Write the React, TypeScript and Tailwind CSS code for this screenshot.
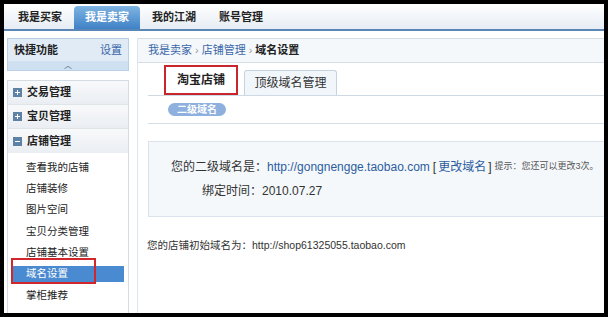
import React from 'react';

const font = "font-['Liberation_Sans','Noto_Sans_CJK_SC',sans-serif]";

const topTabs = ['我是买家', '我是卖家', '我的江湖', '账号管理'];

const groups = ['交易管理', '宝贝管理'];

const shopLinks = ['查看我的店铺', '店铺装修', '图片空间', '宝贝分类管理', '店铺基本设置', '域名设置', '掌柜推荐'];

const SquareIcon = ({ open }: { open?: boolean }) => (
  <span className="flex h-[9px] w-[9px] items-center justify-center bg-[#5d82a6]">
    {open ? (
      <span className="h-[1px] w-[5px] bg-white" />
    ) : (
      <span className="relative h-[5px] w-[5px]">
        <span className="absolute left-0 top-[2px] h-[1px] w-[5px] bg-white" />
        <span className="absolute left-[2px] top-0 h-[5px] w-[1px] bg-white" />
      </span>
    )}
  </span>
);

export default function App() {
  return (
    <div className={`h-[317px] w-[608px] bg-black pl-[4px] pr-[4px] pt-[4px] pb-[4px] ${font}`}>
      <div className="flex h-full w-full flex-col overflow-hidden bg-white">
        {/* top nav */}
        <div className="flex h-[27px] items-end gap-[1px] border-b-[2px] border-[#5a87b5] bg-gradient-to-b from-white to-[#e6edf4] pl-[3px]">
          {topTabs.map((t, i) => (
            <div
              key={t}
              className={`flex h-[23px] w-[66px] items-center justify-center text-[11px] font-bold ${
                i === 1
                  ? 'rounded-t-[4px] bg-gradient-to-b from-[#7fb4e2] to-[#3f82c6] text-white'
                  : 'text-[#222]'
              }`}
            >
              {t}
            </div>
          ))}
        </div>

        <div className="flex flex-1 pt-[7px]">
          {/* sidebar */}
          <div className="ml-[3px] flex w-[122px] flex-col">
            <div className="border border-[#b9cfe5]">
              <div className="flex h-[22px] items-center justify-between bg-[#e0ebf6] px-[6px] text-[11px]">
                <span className="font-bold text-[#222]">快捷功能</span>
                <span className="text-[#3a67a8]">设置</span>
              </div>
              <div className="flex h-[9px] items-center justify-center bg-[#cfe0f1] text-[8px] leading-none text-[#55708c]">
                ︿
              </div>
            </div>

            <div className="mt-[9px] flex-1 border border-b-0 border-[#d4dbe2]">
              {groups.map((g) => (
                <div
                  key={g}
                  className="flex h-[24px] items-center gap-[5px] border-b border-[#dfe4e9] bg-gradient-to-b from-[#f8f9fb] to-[#eaeef2] pl-[5px] text-[11px] font-bold text-[#222]"
                >
                  <SquareIcon />
                  {g}
                </div>
              ))}
              <div className="flex h-[24px] items-center gap-[5px] bg-gradient-to-b from-[#f8f9fb] to-[#eaeef2] pl-[5px] text-[11px] font-bold text-[#222]">
                <SquareIcon open />
                店铺管理
              </div>
              <div className="flex flex-col pt-[4px]">
                {shopLinks.map((s) => (
                  <div key={s} className="relative flex h-[21.3px] items-center text-[10.5px]">
                    {s === '域名设置' ? (
                      <>
                        <div className="ml-[3px] flex h-[16px] w-[113px] items-center bg-[#4a8ad0] pl-[15px] text-white">
                          {s}
                        </div>
                        <div className="absolute left-[3px] top-[-5px] h-[26px] w-[85px] border-[2px] border-[#d0262c]" />
                      </>
                    ) : (
                      <span className="pl-[18px] text-[#222]">{s}</span>
                    )}
                  </div>
                ))}
              </div>
            </div>
          </div>

          {/* main */}
          <div className="ml-[8px] flex min-w-0 flex-1 flex-col overflow-hidden border-l border-[#dfe5eb]">
            <div className="flex h-[25px] items-center border-y border-[#d6dde4] bg-[#f5f8fb] pl-[10px] text-[11px]">
              <span className="text-[#3a67a8]">我是卖家</span>
              <span className="mx-[3px] text-[#999]">›</span>
              <span className="text-[#3a67a8]">店铺管理</span>
              <span className="mx-[3px] text-[#999]">›</span>
              <span className="font-bold text-[#222]">域名设置</span>
            </div>

            <div className="ml-[10px] mt-[3px] flex h-[30px] items-end border-b border-[#cfd9e3] pl-[16px]">
              <div className="relative flex h-[30px] w-[74px] items-center justify-center bg-white text-[12px] font-bold text-[#222]">
                淘宝店铺
                <div className="absolute inset-0 border-[2px] border-[#c8262c]" />
              </div>
              <div className="ml-[6px] flex h-[25px] w-[93px] items-center justify-center rounded-t-[3px] border border-b-0 border-[#c6d4e2] bg-[#f1f6fb] text-[12px] text-[#333]">
                顶级域名管理
              </div>
            </div>

            <div className="ml-[10px] flex h-[28px] items-center border-b border-[#d6dde5] pl-[20px]">
              <span className="flex h-[13px] w-[58px] items-center justify-center rounded-full bg-[#8db0de] text-[10px] font-bold leading-none text-white">
                二级域名
              </span>
            </div>

            <div className="ml-[10px] mt-[17px] flex h-[76px] flex-col justify-center gap-[6px] border border-r-0 border-[#dae3ec] bg-[#f4f8fb] pl-[22px]">
              <div className="flex items-center whitespace-nowrap text-[12px] text-[#333]">
                <span>您的二级域名是：</span>
                <span className="text-[#2d5d9e]">http://gongnengge.taobao.com</span>
                <span className="ml-[3px] text-[#333]">[</span>
                <span className="mx-[2px] text-[#2d5d9e]">更改域名</span>
                <span className="text-[#333]">]</span>
                <span className="ml-[3px] text-[9px] text-[#555]">提示：您还可以更改3次。</span>
              </div>
              <div className="flex items-center whitespace-nowrap pl-[31px] text-[12px] text-[#333]">
                <span>绑定时间：</span>
                <span>2010.07.27</span>
              </div>
            </div>

            <div className="ml-[9px] mt-[21px] whitespace-nowrap text-[10.5px] text-[#333]">
              您的店铺初始域名为：http://shop61325055.taobao.com
            </div>
          </div>
        </div>
      </div>
    </div>
  );
}
